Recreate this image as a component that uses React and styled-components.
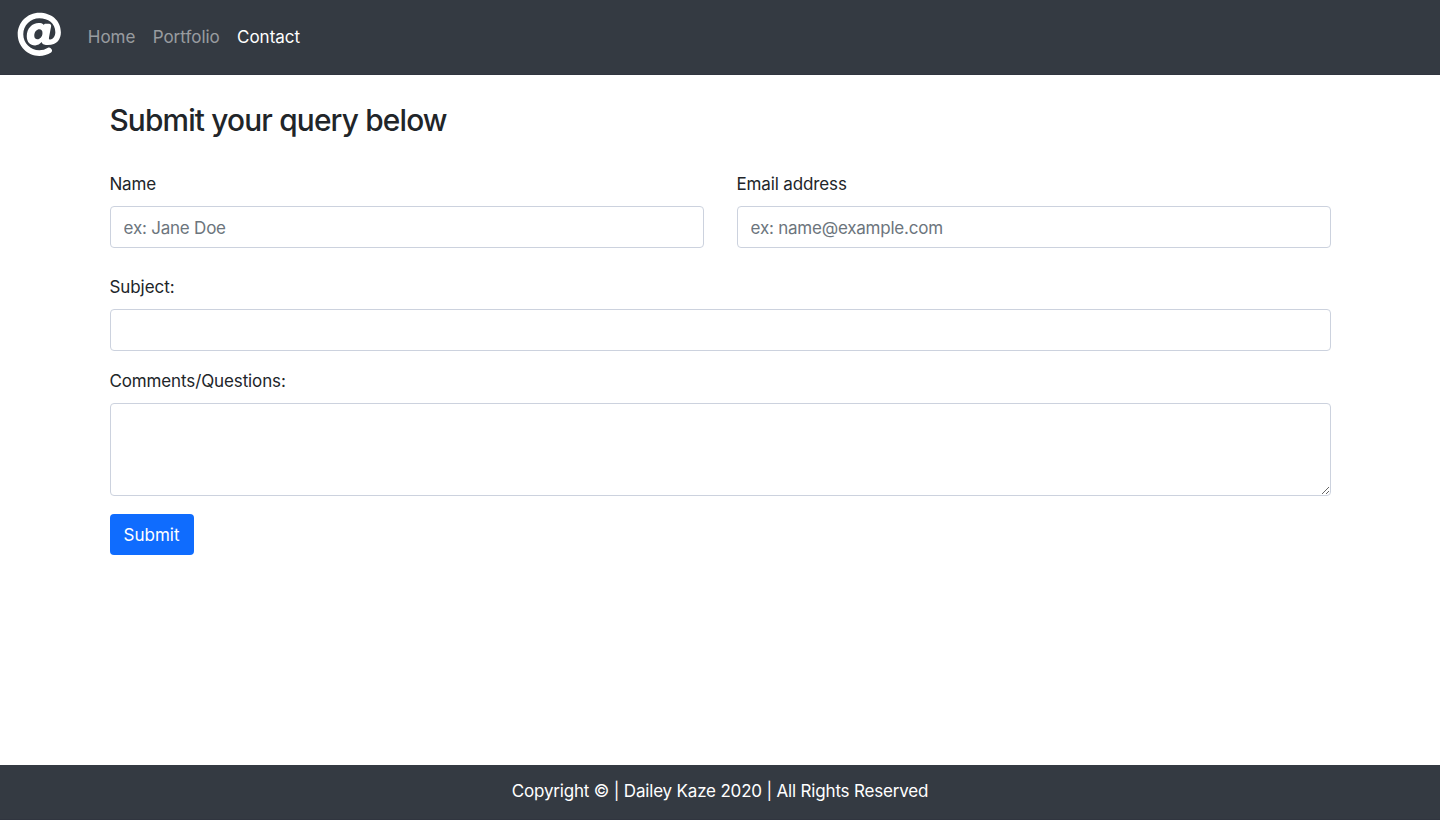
import React from "react";
import styled, { createGlobalStyle } from "styled-components";
import { FaAt } from "react-icons/fa";

const GlobalStyle = createGlobalStyle`
  *, *::before, *::after { box-sizing: border-box; }
  body {
    margin: 0;
    background: #fff;
    color: #212529;
    font: 400 17px/26px Inter, "Liberation Sans", sans-serif;
  }
`;

const Page = styled.div`
  min-height: 100vh;
  display: flex;
  flex-direction: column;
`;

const Navbar = styled.nav`
  height: 75px;
  display: flex;
  gap: 25.8px;
  background: #343a42;
  border-bottom: 1px solid #30353f;
  padding: 12px 17px;
`;

const Brand = styled.a`
  display: block;
  width: 45px;
  height: 45px;
  color: #fff;

  svg {
    display: block;
    width: 44.6px;
    height: 44.6px;
  }
`;

const NavLinks = styled.div`
  display: flex;
  gap: 17.2px;
  padding-top: 12px;
`;

const NavLink = styled.a`
  color: ${(p) => (p.$active ? "#fff" : "rgba(255, 255, 255, 0.5)")};
  text-decoration: none;
`;

const Main = styled.main`
  flex: 1;
  width: 1221px;
  margin-left: 110px;
  padding-top: 26px;
`;

const Title = styled.h3`
  margin: 0 0 32px -0.6px;
  font-size: 29.8px;
  line-height: 38px;
  font-weight: 500;
  letter-spacing: -0.82px;
`;

const Form = styled.form`
  display: flex;
  flex-direction: column;
  align-items: stretch;
`;

const Row = styled.div`
  display: grid;
  grid-template-columns: 1fr 1fr;
  gap: 33px;
  margin-bottom: 26px;
`;

const Field = styled.div`
  display: flex;
  flex-direction: column;
  margin-bottom: ${(p) => p.$below || 0}px;
`;

const Label = styled.label`
  margin: 0 0 9px -0.6px;
  letter-spacing: ${(p) => p.$tracking || 0}px;
`;

const Input = styled.input`
  width: 100%;
  height: 42px;
  padding: 2px 12.6px 0;
  border: 1px solid #ccd2de;
  border-radius: 4px;
  background: #fff;
  font: inherit;
  letter-spacing: -0.22px;
  outline: none;

  &::placeholder {
    color: #6c757d;
    opacity: 1;
  }
`;

const TextArea = styled.textarea`
  width: 100%;
  height: 93px;
  padding: 7px 13px;
  border: 1px solid #ccd2de;
  border-radius: 4px;
  background: #fff;
  font: inherit;
  resize: vertical;
  outline: none;
`;

const SubmitButton = styled.button`
  align-self: flex-start;
  width: 84px;
  height: 41px;
  padding: 1px 1px 0 0;
  border: 0;
  border-radius: 4px;
  background: #0f6cfe;
  color: #fff;
  font: inherit;
`;

const Footer = styled.footer`
  height: 55px;
  padding-top: 13px;
  background: #343a42;
  border-bottom: 1px solid #30353f;
  color: #fff;
  text-align: center;
  letter-spacing: -0.18px;
`;

export default function App() {
  return (
    <Page>
      <GlobalStyle />
      <Navbar>
        <Brand aria-label="Home">
          <FaAt />
        </Brand>
        <NavLinks>
          <NavLink>Home</NavLink>
          <NavLink>Portfolio</NavLink>
          <NavLink $active>Contact</NavLink>
        </NavLinks>
      </Navbar>
      <Main>
        <Title>Submit your query below</Title>
        <Form>
          <Row>
            <Field>
              <Label htmlFor="name" $tracking={-0.1}>Name</Label>
              <Input id="name" placeholder="ex: Jane Doe" />
            </Field>
            <Field>
              <Label htmlFor="email" $tracking={-0.13}>Email address</Label>
              <Input id="email" type="email" placeholder="ex: name@example.com" />
            </Field>
          </Row>
          <Field $below={17}>
            <Label htmlFor="subject" $tracking={-0.05}>Subject:</Label>
            <Input id="subject" />
          </Field>
          <Field $below={18}>
            <Label htmlFor="comments" $tracking={-0.12}>Comments/Questions:</Label>
            <TextArea id="comments" />
          </Field>
          <SubmitButton type="button">Submit</SubmitButton>
        </Form>
      </Main>
      <Footer>Copyright © | Dailey Kaze 2020 | All Rights Reserved</Footer>
    </Page>
  );
}
